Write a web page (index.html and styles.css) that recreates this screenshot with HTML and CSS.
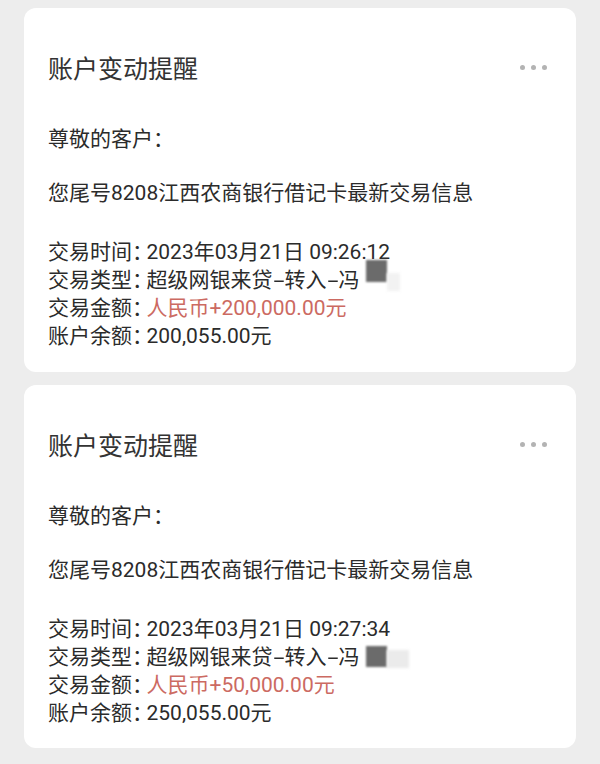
FILE: index.html
```html
<!DOCTYPE html>
<html lang="zh-CN">
<head>
<meta charset="utf-8">
<title>账户变动提醒</title>
<link rel="stylesheet" href="styles.css">
</head>
<body>
<main class="list">
  <section class="card">
    <div class="card-head">
      <h2 class="title">账户变动提醒</h2>
      <div class="more" aria-label="更多"><i></i><i></i><i></i></div>
    </div>
    <p class="line greet">尊敬的客户<span class="colon">：</span></p>
    <p class="line intro">您尾号8208江西农商银行借记卡最新交易信息</p>
    <div class="details">
      <p class="line">交易时间<span class="colon">：</span>2023年03月21日 09:26:12</p>
      <p class="line">交易类型<span class="colon">：</span>超级网银来贷<span class="dash">-</span>转入<span class="dash">-</span>冯<span class="redact r1"></span><span class="haze"></span></p>
      <p class="line">交易金额<span class="colon">：</span><span class="amount">人民币+200,000.00元</span></p>
      <p class="line">账户余额<span class="colon">：</span>200,055.00元</p>
    </div>
  </section>
  <section class="card">
    <div class="card-head">
      <h2 class="title">账户变动提醒</h2>
      <div class="more" aria-label="更多"><i></i><i></i><i></i></div>
    </div>
    <p class="line greet">尊敬的客户<span class="colon">：</span></p>
    <p class="line intro">您尾号8208江西农商银行借记卡最新交易信息</p>
    <div class="details">
      <p class="line">交易时间<span class="colon">：</span>2023年03月21日 09:27:34</p>
      <p class="line">交易类型<span class="colon">：</span>超级网银来贷<span class="dash">-</span>转入<span class="dash">-</span>冯<span class="redact r2"></span><span class="haze wide"></span></p>
      <p class="line">交易金额<span class="colon">：</span><span class="amount">人民币+50,000.00元</span></p>
      <p class="line">账户余额<span class="colon">：</span>250,055.00元</p>
    </div>
  </section>
</main>
</body>
</html>
```

FILE: styles.css
```css
html, body {
  margin: 0;
  padding: 0;
}
body {
  background: #ededed;
  font-family: "Noto Sans CJK SC", "Noto Sans", sans-serif;
  color: #2b2b2b;
}
.list {
  padding: 8px 24px 16px;
  display: flex;
  flex-direction: column;
  gap: 13px;
}
.card {
  background: #ffffff;
  border-radius: 12px;
  padding: 43px 29px 24px 24px;
  height: 364px;
  box-sizing: border-box;
}
.card + .card {
  height: 363px;
}
.card-head {
  display: flex;
  align-items: center;
  justify-content: space-between;
}
.title {
  margin: 0;
  font-size: 25px;
  line-height: 33px;
  font-weight: 400;
  color: #333333;
}
.more {
  display: flex;
  gap: 6px;
  padding-bottom: 1px;
}
.more i {
  width: 5px;
  height: 5px;
  border-radius: 50%;
  background: #b3b3b3;
}
.line {
  margin: 0;
  height: 28px;
  font-family: "Roboto", "Noto Sans CJK SC", sans-serif;
  font-size: 21px;
  line-height: 28px;
  white-space: nowrap;
}
.greet {
  margin-top: 39px;
}
.intro {
  margin-top: 28px;
}
.details {
  margin-top: 29px;
}
.colon {
  font-family: "Noto Sans CJK SC", sans-serif;
  font-feature-settings: "halt" 1;
  margin-right: 4px;
}
.dash {
  display: inline-block;
  width: 12px;
  text-align: center;
  transform: scaleX(1.9);
}
.amount {
  color: #cc6a62;
}
.redact {
  display: inline-block;
  width: 21px;
  height: 22px;
  margin-left: 6px;
  margin-top: -8px;
  background: #6b6b6b;
  filter: blur(0.8px);
}
.r1 {
  vertical-align: 5px;
}
.r2 {
  height: 21px;
  vertical-align: -3px;
}
.haze {
  display: inline-block;
  width: 13px;
  height: 18px;
  margin-top: -8px;
  background: #f2f2f2;
  filter: blur(1.5px);
  vertical-align: -4px;
}
.haze.wide {
  width: 22px;
  background: #ebebeb;
}
```
